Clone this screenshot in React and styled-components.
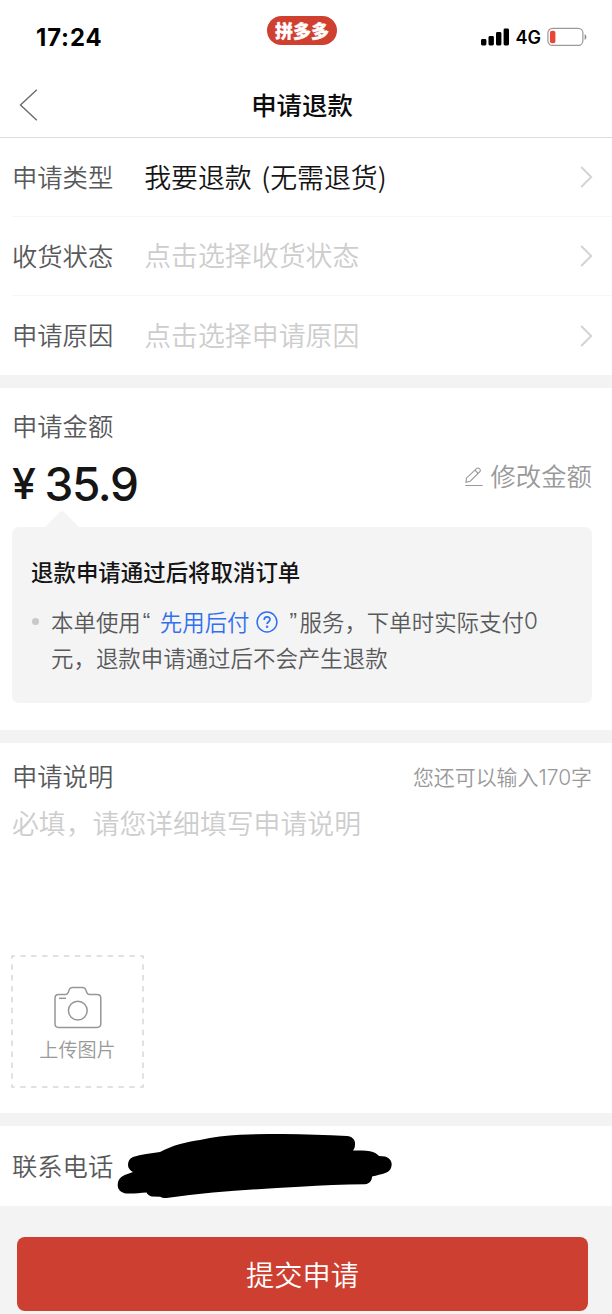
import React from "react";
import styled, { createGlobalStyle } from "styled-components";

const GlobalStyle = createGlobalStyle`
  * {
    box-sizing: border-box;
  }

  body {
    margin: 0;
    background: #f3f3f3;
    color: #151516;
    font-family: "Noto Sans CJK SC", sans-serif;
    font-weight: 350;
  }
`;

const fields = [
  { label: "申请类型", value: "我要退款 (无需退货)", filled: true },
  { label: "收货状态", value: "点击选择收货状态" },
  { label: "申请原因", value: "点击选择申请原因" },
];

function StatusIcons() {
  return (
    <Signal>
      <svg width="29" height="18" viewBox="0 0 29 18">
        <rect x="0" y="11" width="5.4" height="6.5" rx="1.4" />
        <rect x="7.5" y="8" width="5.4" height="9.5" rx="1.4" />
        <rect x="15" y="4" width="5.4" height="13.5" rx="1.4" />
        <rect x="22.6" y="0.5" width="5.4" height="17" rx="1.4" />
      </svg>
      <span>4G</span>
      <svg width="41" height="20" viewBox="0 0 41 20" fill="none">
        <rect x="0.9" y="1.4" width="35" height="17" rx="4.6" stroke="#9a9a9a" strokeWidth="1.2" />
        <rect x="3" y="3.7" width="5.4" height="12.5" rx="2" fill="#ea4535" />
        <path d="M37.6 7.2c2.4.6 2.4 5 0 5.6z" fill="#8d8d8d" />
      </svg>
    </Signal>
  );
}

function Camera() {
  return (
    <svg width="48" height="43" viewBox="0 0 48 43" fill="none" stroke="#969696" strokeWidth="1.5">
      <path d="M4.5 8.4h7.3c1.4 0 2-.7 2.4-1.8l1.1-3c.5-1.5 1.2-2.2 2.7-2.2h11c1.5 0 2.2.7 2.7 2.2l1.1 3c.4 1.1 1 1.8 2.4 1.8h7.8c2.3 0 3.8 1.4 3.8 3.6v25.8c0 2.2-1.5 3.6-3.8 3.6H4.5c-2.3 0-3.5-1.4-3.5-3.6V12c0-2.2 1.2-3.6 3.5-3.6z" />
      <circle cx="23.8" cy="24.6" r="9.4" />
      <path d="M5 12.3h7" />
    </svg>
  );
}

function Scribble() {
  return (
    <svg width="275" height="66" viewBox="0 0 275 66">
      <path d="M43 19C55 12.5 69 9 83 7C96 4 109 2.500 123 1.700C138 1 152 1 166 1C188 1.300 209 2 230 3C235.500 3.500 238.500 7 238 11.500C238 14 237.300 16 236 17.500C242 17.500 248 17.600 253 18.200C257 19 260 20.700 262 23L268 23.400C272 24.400 274.700 27.500 274.700 31.500C274.500 35.500 272.500 38.500 269 39.800C264 41.500 260 42.500 255 43.500C255 47.500 253 50.500 248 51.300C226 51.500 205 52.500 183 53.700C154 55 125 57.500 96 59.500C80 61 65 63 49.500 65C47 65.200 45 64.800 43 63.700L35 63.500C32.500 63 30.500 61.500 29.500 59.500C23 60 16 60.800 9.500 60.500C4 60 .7 56.500 .7 52C.7 48 2.500 45 5 43.500C8.500 41.500 12.500 40.200 16 39C13 37.500 11 35 11 32C11 28 12.800 25.500 16 24C24 21.500 34 20.400 43 19z" />
    </svg>
  );
}

function App() {
  return (
    <Page>
      <GlobalStyle />
      <StatusBar>
        <Time>17:24</Time>
        <Brand>拼多多</Brand>
        <StatusIcons />
      </StatusBar>
      <NavBar>
        <svg width="19" height="32" viewBox="0 0 19 32" fill="none" stroke="#6b6b6b" strokeWidth="1.4">
          <path d="M17.800 .8L1.500 16l16.300 15.200" />
        </svg>
        <Title>申请退款</Title>
      </NavBar>

      <Section>
        {fields.map((field) => (
          <Field key={field.label}>
            <Label>{field.label}</Label>
            <Value $filled={field.filled}>{field.value}</Value>
            <svg width="13" height="22" viewBox="0 0 13 22" fill="none" stroke="#d3d3d3" strokeWidth="1.900">
              <path d="M1.200 1l10 10-10 10" />
            </svg>
          </Field>
        ))}
      </Section>

      <AmountSection>
        <Label>申请金额</Label>
        <AmountRow>
          <Amount>
            <Yen>¥</Yen>35.9
          </Amount>
          <Edit>
            <svg width="18" height="20" viewBox="0 0 18 20" fill="none" stroke="#999" strokeWidth="1.100">
              <path d="M.9 15.300l.7-4.400L11.500 1.700c1-.9 2.200-.8 3.100.1s1 2.100.1 3L5.200 14.200z" />
              <path d="M10 3.200l3.200 3.300M.3 18.500h17.400" />
            </svg>
            修改金额
          </Edit>
        </AmountRow>
        <Tip>
          <Arrow width="34" height="16" viewBox="0 0 34 16">
            <path d="M0 16L14.500 1.500q2.500-2.500 5 0L34 16z" fill="#f4f4f4" />
          </Arrow>
          <TipTitle>退款申请通过后将取消订单</TipTitle>
          <TipItem>
            <Dot />
            <div>
              <TipLine>
                本单使用<Quote>“</Quote>
                <TipLink>
                  先用后付
                  <svg width="22" height="22" viewBox="0 0 22 22" fill="none" stroke="#3070f0" strokeWidth="1.500">
                    <circle cx="11" cy="11" r="9.900" />
                    <path d="M8.200 8.900c0-4 5.800-3.900 5.800-.4 0 2.200-2.900 2.300-2.900 4.600" strokeWidth="1.700" />
                    <circle cx="11.100" cy="15.700" r=".5" />
                  </svg>
                </TipLink>
                <Quote>”</Quote>服务，下单时实际支付<Digits>0</Digits>
              </TipLine>
              <TipLine>元，退款申请通过后不会产生退款</TipLine>
            </div>
          </TipItem>
        </Tip>
      </AmountSection>

      <NoteSection>
        <NoteHead>
          <Label>申请说明</Label>
          <Counter>
            您还可以输入<Digits>170</Digits>字
          </Counter>
        </NoteHead>
        <Placeholder>必填，请您详细填写申请说明</Placeholder>
        <Upload>
          <Camera />
          <span>上传图片</span>
          <Dashes width="133" height="133" viewBox="0 0 133 133" fill="none">
            <rect x="1" y="1" width="131" height="131" stroke="#d8d8d8" strokeWidth="1.500" strokeDasharray="5.500 5.416" strokeDashoffset="2.700" />
          </Dashes>
        </Upload>
      </NoteSection>

      <PhoneSection>
        <Label>联系电话</Label>
        <Scribble />
      </PhoneSection>

      <Submit>提交申请</Submit>
    </Page>
  );
}

const Page = styled.div`
  width: 612px;
  height: 1314px;
  overflow: hidden;
  background: #f3f3f3;
`;

const StatusBar = styled.div`
  display: grid;
  grid-template-columns: 1fr 70px 1fr;
  align-items: center;
  height: 74px;
  padding: 0 24px 0 36px;
  background: #fff;
`;

const Time = styled.div`
  padding-top: 1px;
  font: 700 23.8px/28px Inter, sans-serif;
  letter-spacing: 0.9px;
  color: #000;
`;

const Brand = styled.div`
  width: 70px;
  height: 29px;
  margin: -13px 0 0 -10px;
  border-radius: 15px;
  background: #cf4031;
  color: #fff;
  font-size: 18px;
  font-weight: 900;
  line-height: 28px;
  text-align: center;
  -webkit-text-stroke: 0.3px #fff;
`;

const Signal = styled.div`
  display: flex;
  align-items: center;
  justify-content: flex-end;
  color: #000;
  font: 600 18px/24px Inter, sans-serif;

  span {
    margin: 0 6px;
    padding-top: 2px;
  }
`;

const NavBar = styled.div`
  display: grid;
  grid-template-columns: 19px 1fr 27px;
  align-items: center;
  height: 64px;
  padding: 0 19px 2px;
  border-bottom: 1px solid #dcdcdc;
  background: #fff;
`;

const Title = styled.div`
  padding-bottom: 2px;
  color: #0c0c0c;
  font-size: 25.4px;
  font-weight: 500;
  line-height: 36px;
  text-align: center;
`;

const Section = styled.div`
  margin-bottom: 13px;
  padding-left: 12px;
  background: #fff;
`;

const Field = styled.div`
  display: flex;
  align-items: center;
  height: 79px;
  padding-right: 19px;
  border-bottom: 1px solid #f6f6f6;

  &:last-child {
    border-bottom: 0;
  }
`;

const Label = styled.div`
  padding-bottom: 3px;
  color: #58595b;
  font-size: 25.3px;
  line-height: 36px;
  white-space: nowrap;
`;

const Value = styled.div`
  flex: 1;
  margin-left: 31px;
  padding-bottom: ${(props) => (props.$filled ? "1px" : "2px")};
  color: ${(props) => (props.$filled ? "#151516" : "#cdcdcd")};
  font-size: 26.9px;
  line-height: 36px;
  word-spacing: 3.5px;
`;

const AmountSection = styled.div`
  height: 342px;
  margin-bottom: 13px;
  padding: 19px 20px 0 12px;
  background: #fff;
`;

const AmountRow = styled.div`
  display: flex;
  align-items: center;
  justify-content: space-between;
  height: 81px;
`;

const Amount = styled.div`
  margin-top: -6px;
  font: 550 46px/60px Inter, sans-serif;
  letter-spacing: -1.4px;
`;

const Yen = styled.span`
  margin-right: 10px;
  font-size: 43px;
  vertical-align: 2px;
`;

const Edit = styled.div`
  display: flex;
  align-items: center;
  gap: 7px;
  margin-top: -24px;
  color: #999;
  font-size: 25.4px;
  line-height: 36px;

  svg {
    margin-top: 5px;
  }
`;

const Tip = styled.div`
  position: relative;
  height: 176px;
  padding: 27px 20px 0;
  border-radius: 7px;
  background: #f4f4f4;
`;

const Arrow = styled.svg`
  position: absolute;
  top: -16px;
  left: 33px;
`;

const TipTitle = styled.div`
  margin-left: -1px;
  font-size: 22.45px;
  font-weight: 500;
  line-height: 34px;
`;

const TipItem = styled.div`
  display: flex;
  margin-top: 15px;
  color: #58595b;
  font-size: 22.45px;
  white-space: nowrap;
`;

const TipLine = styled.div`
  display: flex;
  align-items: center;
  height: 36px;
  line-height: 36px;
`;

const Dot = styled.div`
  width: 7px;
  height: 7px;
  margin: 15px 12px 0 0;
  border-radius: 50%;
  background: #c8c8c8;
`;

const Quote = styled.span`
  width: 12px;
  padding-left: 2px;
  font-family: "Liberation Sans", sans-serif;
`;

const Digits = styled.span`
  font-family: Inter, sans-serif;
  font-weight: 350;
`;

const TipLink = styled.span`
  display: flex;
  align-items: center;
  gap: 6px;
  margin: 0 10px 0 7px;
  color: #3070f0;

  svg {
    margin-top: 1px;
  }
`;

const NoteSection = styled.div`
  height: 370px;
  margin-bottom: 13px;
  padding: 14px 20px 0 12px;
  background: #fff;
`;

const NoteHead = styled.div`
  display: flex;
  align-items: center;
  justify-content: space-between;
`;

const Counter = styled.div`
  color: #999;
  font-size: 20.95px;
  line-height: 36px;
`;

const Placeholder = styled.div`
  height: 159px;
  padding-top: 8px;
  color: #cdcdcd;
  font-size: 26.85px;
  line-height: 38px;
`;

const Upload = styled.div`
  position: relative;
  display: flex;
  flex-direction: column;
  align-items: center;
  width: 133px;
  height: 133px;
  margin-left: -1px;
  padding-top: 31px;
  color: #999;
  font-size: 19.1px;

  span {
    margin-top: 6px;
    line-height: 28px;
  }
`;

const Dashes = styled.svg`
  position: absolute;
  top: 0;
  left: 0;
`;

const PhoneSection = styled.div`
  display: flex;
  align-items: center;
  gap: 4px;
  height: 80px;
  padding-left: 12px;
  background: #fff;
`;

const Submit = styled.button`
  display: block;
  width: 571px;
  height: 74px;
  margin: 31px 0 0 17px;
  padding: 0;
  border: 0;
  border-radius: 8px;
  background: #cd3f31;
  color: #fff;
  font-family: inherit;
  font-size: 28.2px;
  font-weight: inherit;
  line-height: 74px;
`;

export default App;
